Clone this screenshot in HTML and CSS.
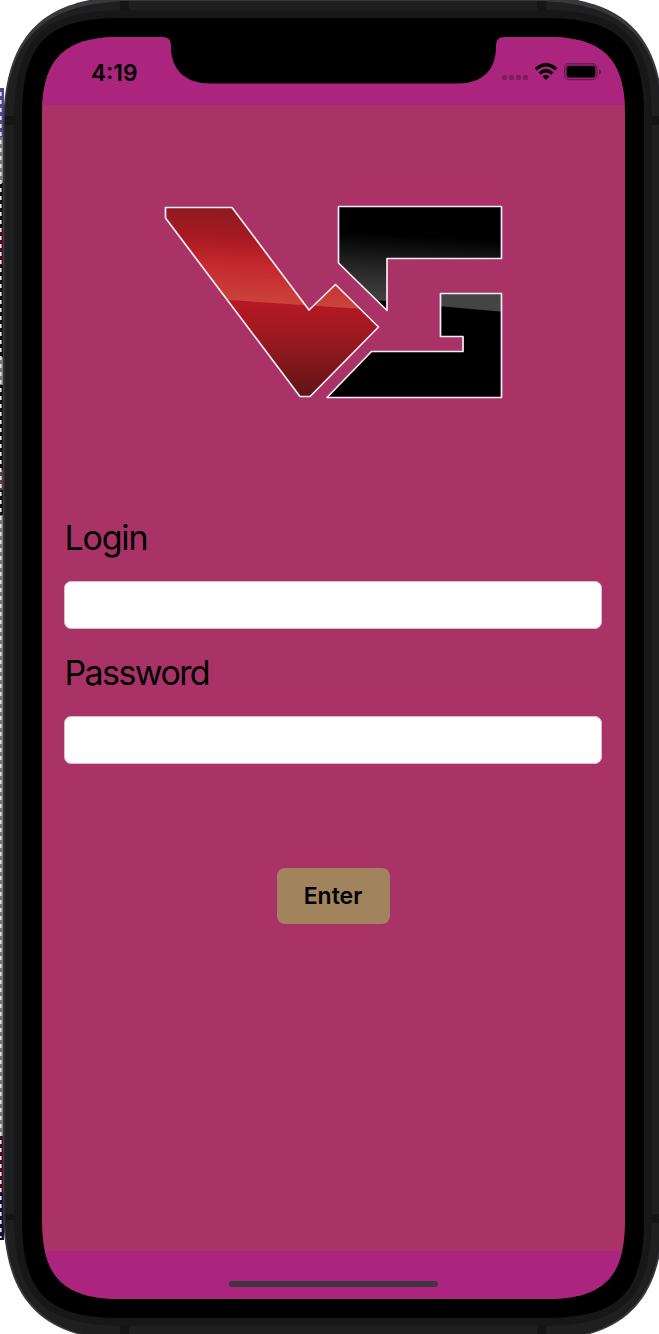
FILE: index.html
```html
<!DOCTYPE html>
<html lang="en">
<head>
<meta charset="utf-8">
<title>Login</title>
<link rel="stylesheet" href="styles.css">
</head>
<body>
<div class="device">
  <svg class="frame" width="659" height="1334" viewBox="0 0 659 1334" aria-hidden="true">
    <g>
      <path fill="#54458c" d="M0 88H4V137H0Z"/><path fill="#777" d="M0 137H4V183H0ZM0 357H4V385H0ZM0 515H4V1136H0Z"/>
      <path fill="#151515" d="M0 183H4V227H0ZM0 265H4V357H0ZM0 385H4V470H0ZM0 490H4V515H0Z"/>
      <path fill="#4a0e28" d="M0 227H4V265H0ZM0 1136H4V1193H0Z"/><path fill="#55404f" d="M0 470H4V490H0Z"/><path fill="#1a0f38" d="M0 1193H4V1240H0Z"/>
    </g>
    <path class="edge" d="M3 130C3 35 42 -4 135 -4H532C625 -4 664 35 664 130V1207C664 1302 625 1341 532 1341H135C42 1341 3 1302 3 1207Z"/>
    <path class="metal" d="M4.500 130C4.500 37 44 1 135 1H532C623 1 662.500 37 662.500 130V1207C662.500 1300 623 1340 532 1340H135C44 1340 4.500 1300 4.500 1207Z"/>
    <path class="antenna" d="M120 1h9v10h-9zM537 1h9v10h-9zM5 116h10v9H5zM652 116h7v9h-7zM5 1214h10v6H5zM652 1214h7v9h-7zM120 1325h9v9h-9zM537 1325h9v9h-9z"/>
    <path class="rim" d="M14 124C14 36 42 10 128 10H538C624 10 652 36 652 124V1212C652 1300 624 1326 538 1326H128C42 1326 14 1300 14 1212Z"/>
    <path class="glass" d="M22 118C22 42 47 18 122 18H544C619 18 644 42 644 118V1218C644 1294 619 1318 544 1318H122C47 1318 22 1294 22 1218Z"/>
    <path class="dots" d="M.8 92V1238"/>
  </svg>
  <main class="screen">
    <header class="status">
      <time class="clock">4:19</time>
      <svg class="indicators" width="102" height="22" viewBox="0 0 102 22" aria-label="Wi-Fi and battery">
        <g fill-opacity=".25"><rect x="2" y="14" width="5" height="5" rx="1.500"/><rect x="9" y="14" width="5" height="5" rx="1.500"/><rect x="16" y="14" width="5" height="5" rx="1.500"/><rect x="23" y="14" width="5" height="5" rx="1.500"/></g>
        <g fill="none" stroke="#000" stroke-width="3.300"><path d="M35.800 8.300Q46 -.8 56.200 8.300"/><path d="M39.700 12.500Q46 7 52.300 12.500"/></g>
        <path d="M42.500 15.300Q46 12.700 49.500 15.300L46 19Z"/>
        <rect x="64.700" y="2.700" width="32" height="15.800" rx="4" fill="none" stroke="#000" stroke-opacity=".35" stroke-width="1.400"/>
        <rect x="66.600" y="4.700" width="28.700" height="11.800" rx="2"/>
        <path d="M98.800 8Q101 8.800 101 10.800T98.800 13.500Z" fill-opacity=".4"/>
      </svg>
    </header>
    <form class="login">
      <svg class="logo" width="342" height="196" viewBox="163 204 342 196" aria-label="VG">
        <defs>
          <linearGradient id="red-top" gradientUnits="userSpaceOnUse" x1="250" y1="207" x2="245" y2="308">
            <stop stop-color="#891a20"/><stop offset=".33" stop-color="#a91a22"/><stop offset=".6" stop-color="#c62a2e"/><stop offset=".85" stop-color="#c93c38"/><stop offset="1" stop-color="#cc483e"/>
          </linearGradient>
          <linearGradient id="red-base" gradientUnits="userSpaceOnUse" x1="0" y1="300" x2="0" y2="397">
            <stop stop-color="#b81824"/><stop offset=".4" stop-color="#99191f"/><stop offset="1" stop-color="#5e1416"/>
          </linearGradient>
          <linearGradient id="gloss" gradientUnits="userSpaceOnUse" x1="350" y1="232" x2="346" y2="305">
            <stop stop-color="#000"/><stop offset=".55" stop-color="#2b2b2b"/><stop offset="1" stop-color="#474747"/>
          </linearGradient>
          <clipPath id="v"><path d="M165.500 207.500H232L309 310L335.500 284.500L378.500 327L310 396.500H300L165.500 218Z"/></clipPath>
          <clipPath id="g"><path d="M338.500 206.500H501.500V258.500H387V310.500L338.500 263ZM440.500 293.500H501.500V397.500H327L371.500 351.500H463V336.500H440.500Z"/></clipPath>
        </defs>
        <g clip-path="url(#v)"><path fill="url(#red-base)" d="M163 204H380V400H163Z"/><path fill="url(#red-top)" d="M163 204H380V310L229 300L163 296Z"/></g>
        <g clip-path="url(#g)"><path d="M320 200H510V400H320Z"/><path fill="url(#gloss)" d="M335 204H505V260H388V301L335 299Z"/><path fill="#444" d="M438 290H505V312L438 306Z"/></g>
        <g class="outline"><path d="M165.500 207.500H232L309 310L335.500 284.500L378.500 327L310 396.500H300L165.500 218Z"/><path d="M338.500 206.500H501.500V258.500H387V310.500L338.500 263ZM440.500 293.500H501.500V397.500H327L371.500 351.500H463V336.500H440.500Z"/></g>
      </svg>
      <label class="label label-login" for="login">Login</label>
      <input class="field" id="login" type="text">
      <label class="label label-password" for="password">Password</label>
      <input class="field" id="password" type="password">
      <button class="enter" type="button">Enter</button>
    </form>
    <footer class="home"><span class="handle"></span></footer>
  </main>
  <svg class="notch" width="343" height="47" viewBox="120 0 343 47" aria-hidden="true">
    <path d="M120 0C127 0 129 3 129 10C129 33 144 46.500 168 46.500H416C440 46.500 454 33 454 10C454 3 456 0 463 0Z"/>
  </svg>
</div>
</body>
</html>
```
FILE: styles.css
```css
* { box-sizing: border-box; }
body { margin: 0; background: #fff; color: #000; font-family: Inter, "Liberation Sans", sans-serif; }
.device { position: relative; width: 659px; height: 1334px; padding: 37px 34px 35px 42px; overflow: hidden; }
.frame { position: absolute; top: 0; left: 0; }
.edge { fill: #39383d; }
.metal { fill: #1f1f1f; }
.antenna { fill: #151515; }
.rim { fill: #171717; }
.glass { fill: #000; }
.dots { fill: none; stroke: #e4e4e4; stroke-width: 1.6; stroke-dasharray: 4 4; }
.screen {
  position: relative;
  display: flex;
  flex-direction: column;
  width: 583px;
  height: 1262px;
  background: #a93367;
  clip-path: path("M0 78V1184C0 1240 22 1262 78 1262H505C561 1262 583 1240 583 1184V78C583 22 561 0 505 0H78C22 0 0 22 0 78Z");
}
.notch { position: absolute; top: 37px; left: 162px; pointer-events: none; }
.status { display: flex; justify-content: space-between; align-items: flex-start; height: 67.5px; padding: 22px 23px 0 49px; background: #ab257e; }
.clock { font-size: 22.7px; line-height: 27px; font-weight: 600; }
.indicators { margin-top: 2px; }
.login { flex: 1; display: flex; flex-direction: column; padding: 99.5px 23px 0 22px; }
.logo { align-self: center; margin: 0 0 117px 1px; }
.outline { fill: none; stroke: #f8eef2; stroke-width: 1.7; stroke-linejoin: round; }
.label { height: 64px; padding-left: .5px; font-size: 34px; line-height: 42px; }
.label-login { letter-spacing: -1.2px; }
.label-password { letter-spacing: -1.6px; }
.field { width: 100%; height: 48px; margin: 0 0 23px; padding: 0 12px; border: 1px solid #dcbccb; border-radius: 7px; background: #fff; font: inherit; font-size: 24px; outline: none; }
.enter { align-self: center; width: 113px; height: 56px; margin-top: 81px; padding: 0; border: 0; border-radius: 8px; background: #a1835d; color: #000; font: 600 23px/56px Inter, "Liberation Sans", sans-serif; }
.home { display: flex; justify-content: center; height: 48.5px; padding-top: 30.5px; background: #ab257e; }
.handle { width: 209px; height: 6px; border-radius: 3px; background: #3d3540; }
```
